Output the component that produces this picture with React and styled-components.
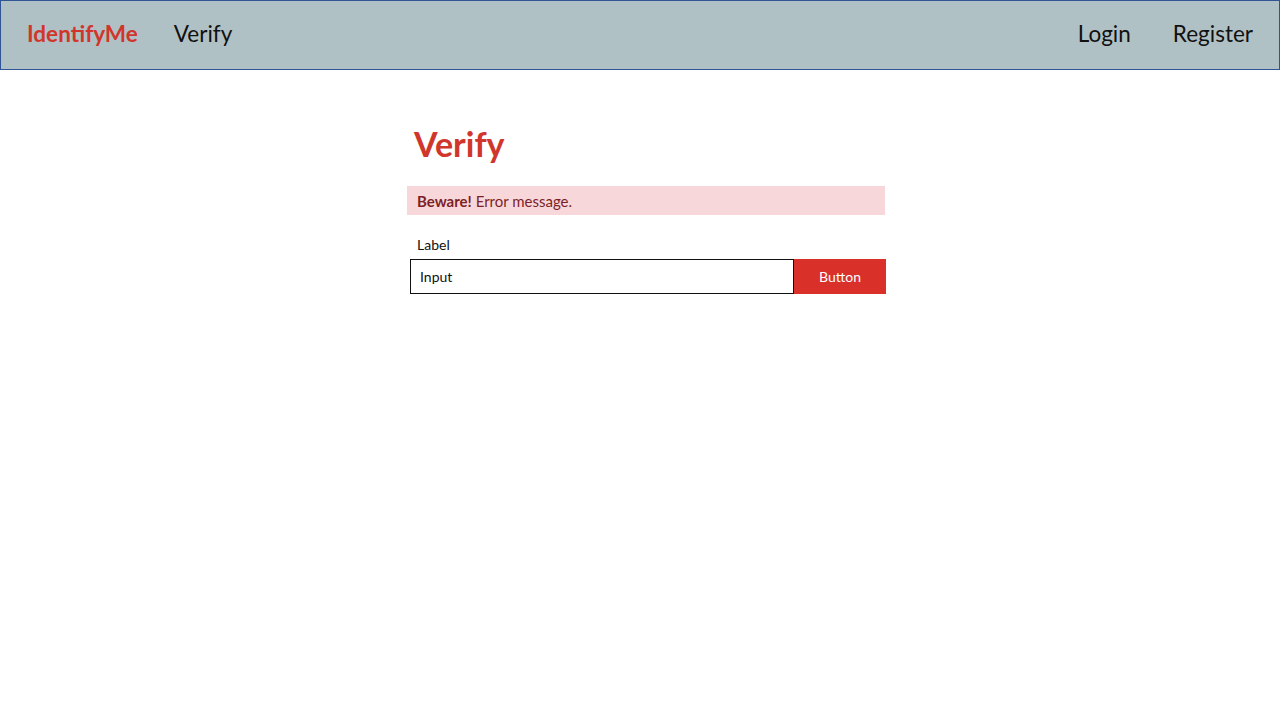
import React, { useState } from 'react';
import styled, { createGlobalStyle } from 'styled-components';

const GlobalStyle = createGlobalStyle`
	body {
		margin: 0;
		font-family: Lato, 'Open Sans', sans-serif;
		background: #ffffff;
	}
	* {
		box-sizing: border-box;
	}
`;

const App = () => {
	const [value, setValue] = useState('');

	return (
		<>
			<GlobalStyle />
			<Navbar>
				<NavGroup $gap={36}>
					<Brand href="#">IdentifyMe</Brand>
					<NavLink href="#">Verify</NavLink>
				</NavGroup>
				<NavGroup $gap={42}>
					<NavLink href="#">Login</NavLink>
					<NavLink href="#">Register</NavLink>
				</NavGroup>
			</Navbar>
			<Main>
				<Title>Verify</Title>
				<Alert>
					<strong>Beware!</strong> Error message.
				</Alert>
				<Form onSubmit={(e) => e.preventDefault()}>
					<Label htmlFor="code">Label</Label>
					<InputRow>
						<Input
							id="code"
							placeholder="Input"
							value={value}
							onChange={(e) => setValue(e.target.value)}
						/>
						<Button type="submit">Button</Button>
					</InputRow>
				</Form>
			</Main>
		</>
	);
};

const Navbar = styled.nav`
	height: 70px;
	background: #b0c1c5;
	border: 1px solid #2f5597;
	display: flex;
	align-items: center;
	justify-content: space-between;
	padding: 0 26px 3px 26px;
`;

const NavGroup = styled.div`
	display: flex;
	align-items: center;
	gap: ${(p) => p.$gap}px;
`;

const Brand = styled.a`
	color: #d0362b;
	font-weight: 700;
	font-size: 22.5px;
	text-decoration: none;
`;

const NavLink = styled.a`
	color: #111111;
	font-size: 22.5px;
	text-decoration: none;
`;

const Main = styled.main`
	width: 479px;
	margin-left: 407px;
	padding-top: 54px;
`;

const Title = styled.h1`
	margin: 0 0 22px 7px;
	color: #d0362b;
	font-size: 34px;
	font-weight: 700;
	line-height: 40px;
`;

const Alert = styled.div`
	width: 478px;
	background: #f7d7da;
	color: #7d1f27;
	font-size: 15px;
	height: 29px;
	display: flex;
	align-items: center;
	padding: 0 10px;
	white-space: pre;

	strong {
		font-weight: 700;
	}
`;

const Form = styled.form`
	margin-top: 21px;
	padding-left: 3px;
`;

const Label = styled.label`
	display: block;
	font-size: 14px;
	color: #111111;
	margin: 0 0 6px 7px;
`;

const InputRow = styled.div`
	display: flex;
	height: 35px;
`;

const Input = styled.input`
	flex: 1;
	border: 1px solid #111111;
	padding: 0 9px;
	font-family: inherit;
	font-size: 14px;
	color: #111111;
	outline: none;

	&::placeholder {
		color: #111111;
	}
`;

const Button = styled.button`
	width: 92px;
	border: none;
	background: #d9302a;
	color: #ffffff;
	font-family: inherit;
	font-size: 14px;
	cursor: pointer;
`;

export default App;
